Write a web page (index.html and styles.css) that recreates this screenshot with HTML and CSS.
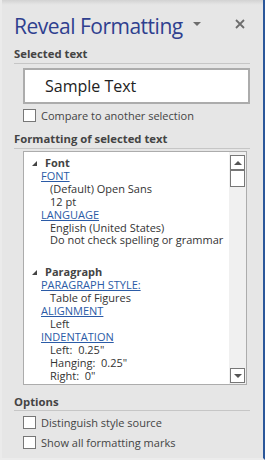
FILE: index.html
```html
<!DOCTYPE html>
<html lang="en">
<head>
    <meta charset="UTF-8">
    <title>Reveal Formatting</title>
    <link rel="stylesheet" href="styles.css">
</head>
<body>
    <div class="pane">
        <div class="pane-header">
            <h1>Reveal Formatting</h1>
            <span class="pane-menu"></span>
            <span class="pane-close">
                <svg width="10" height="10" viewBox="0 0 10 10">
                    <path d="M1 1 L9 9 M9 1 L1 9" stroke="#6d6d6d" stroke-width="1.8"/>
                </svg>
            </span>
        </div>

        <h2 class="section-title">Selected text</h2>
        <div class="sample-box">Sample Text</div>
        <label class="check-row compare">
            <span class="check"></span>
            Compare to another selection
        </label>

        <h2 class="section-title formatting">Formatting of selected text</h2>
        <div class="list-box">
            <div class="list-content">
                <div class="group-title"><span class="tri"></span>Font</div>
                <a class="prop">FONT</a>
                <div class="val">(Default) Open Sans</div>
                <div class="val">12 pt</div>
                <a class="prop">LANGUAGE</a>
                <div class="val">English (United States)</div>
                <div class="val">Do not check spelling or grammar</div>

                <div class="group-title group-gap"><span class="tri"></span>Paragraph</div>
                <a class="prop">PARAGRAPH STYLE:</a>
                <div class="val">Table of Figures</div>
                <a class="prop">ALIGNMENT</a>
                <div class="val">Left</div>
                <a class="prop">INDENTATION</a>
                <div class="val">Left:&nbsp; 0.25"</div>
                <div class="val">Hanging:&nbsp; 0.25"</div>
                <div class="val">Right:&nbsp; 0"</div>
            </div>
            <div class="scrollbar">
                <div class="scroll-btn up"><span></span></div>
                <div class="scroll-thumb"></div>
                <div class="scroll-track"></div>
                <div class="scroll-btn down"><span></span></div>
            </div>
        </div>

        <h2 class="section-title options">Options</h2>
        <label class="check-row opt">
            <span class="check"></span>
            Distinguish style source
        </label>
        <label class="check-row opt">
            <span class="check"></span>
            Show all formatting marks
        </label>
    </div>
</body>
</html>
```

FILE: styles.css
```css
* {
    margin: 0;
    padding: 0;
    box-sizing: border-box;
}

body {
    width: 265px;
    height: 460px;
    overflow: hidden;
    background: #e6e6e6;
    font-family: "Open Sans", "Noto Sans", sans-serif;
    color: #444;
}

.pane {
    height: 460px;
    padding: 0 13px 0 12px;
    border-left: 2px solid #ebebeb;
    border-right: 2px solid #2b579a;
    border-bottom: 2px solid #ececec;
    background: linear-gradient(#d2d2d2 0, #dfdfdf 3px, #e6e6e6 5px);
}

.pane-header {
    display: flex;
    align-items: flex-start;
    height: 46px;
    padding-top: 12px;
}

h1 {
    font-size: 21px;
    line-height: 28px;
    font-weight: 400;
    color: #2f3f8f;
    letter-spacing: -0.5px;
    flex: 1;
}

.pane-menu {
    width: 0;
    height: 0;
    border-left: 4px solid transparent;
    border-right: 4px solid transparent;
    border-top: 4px solid #6d6d6d;
    margin-top: 10px;
    margin-right: 34px;
}

.pane-close {
    display: flex;
    margin-top: 7px;
    margin-right: 5px;
}

.section-title {
    font-size: 11.3px;
    font-weight: 700;
    color: #444;
    line-height: 16px;
    padding-bottom: 1px;
    border-bottom: 1px solid #c6c6c6;
    margin-bottom: 4px;
}

.sample-box {
    margin-left: 9px;
    height: 36px;
    background: #fff;
    border: 2px solid #acacac;
    font-size: 16px;
    color: #222;
    padding-left: 20px;
    line-height: 32px;
}

.check-row {
    display: flex;
    align-items: center;
    height: 13px;
    margin-left: 9px;
    font-size: 11px;
    color: #444;
    gap: 5px;
}

.compare {
    margin-top: 5px;
    margin-bottom: 9px;
}

.check {
    width: 13px;
    height: 13px;
    background: #fff;
    border: 1px solid #777;
}

.formatting {
    margin-bottom: 2px;
}

.list-box {
    display: flex;
    margin: 0 3px 0 9px;
    height: 234px;
    background: #fff;
    border: 1px solid #acacac;
}

.list-content {
    flex: 1;
    padding: 5px 0 0 17px;
    font-size: 11px;
    line-height: 12.9px;
    color: #333;
}

.group-title {
    font-weight: 700;
    color: #444;
    display: flex;
    align-items: center;
}

.group-gap {
    margin-top: 19px;
}

.tri {
    width: 0;
    height: 0;
    border-left: 5px solid transparent;
    border-bottom: 5px solid #444;
    margin: 0 8px 0 -9px;
}

.prop {
    display: block;
    color: #2b5ba6;
    text-decoration: underline;
}

.val {
    padding-left: 9px;
}

.scrollbar {
    width: 17px;
    padding: 3px 1px 1px;
    background: #f0f0f0;
    display: flex;
    flex-direction: column;
}

.scroll-btn {
    height: 15px;
    border: 1px solid #777;
    background: #fff;
    display: flex;
    align-items: center;
    justify-content: center;
}

.scroll-btn span {
    width: 0;
    height: 0;
    border-left: 4px solid transparent;
    border-right: 4px solid transparent;
}

.up span {
    border-bottom: 4px solid #555;
}

.down span {
    border-top: 4px solid #555;
}

.scroll-thumb {
    height: 17px;
    background: #fff;
    border: 1px solid #777;
}

.scroll-track {
    flex: 1;
}

.options {
    margin-top: 9px;
    padding-bottom: 0;
    margin-bottom: 5px;
}

.opt {
    margin-bottom: 7px;
}
```
